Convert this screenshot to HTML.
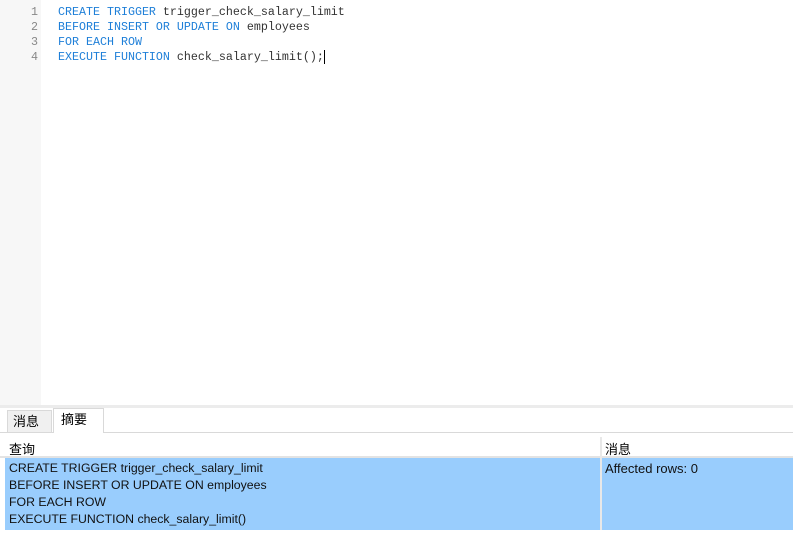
<!DOCTYPE html>
<html><head><meta charset="utf-8"><style>
body{margin:0;width:793px;height:545px;overflow:hidden;background:#fff;position:relative;font-family:"Liberation Sans","Noto Sans CJK SC",sans-serif}
.gut{position:absolute;left:0;top:0;width:41px;height:405px;background:#f7f7f7}
.code{position:absolute;left:0;top:5px;font-family:"Liberation Mono",monospace;font-size:11.67px;line-height:15px}
.ln{position:absolute;left:0;width:38px;text-align:right;color:#888}
.tx{position:absolute;left:58px;white-space:pre;color:#333}
.k{color:#1e7fd8}
.band{position:absolute;left:0;top:405px;width:793px;height:3px;background:#ececec}
.tabs{position:absolute;left:0;top:408px;width:793px;height:24px;border-bottom:1px solid #d9d9d9}
.t1{position:absolute;left:7px;top:2px;width:45px;height:22px;background:#f0f0f0;border:1px solid #d9d9d9;border-bottom:none;font-size:13px;line-height:22px;padding-left:5px;box-sizing:border-box}
.t2{position:absolute;left:53px;top:0;width:51px;height:25px;background:#fff;border:1px solid #d9d9d9;border-bottom:none;font-size:13px;line-height:22px;padding-left:7px;box-sizing:border-box}
.hd{position:absolute;top:439px;font-size:13px;color:#000}
.hl{position:absolute;left:0;top:456px;width:793px;height:2px;background:#e3e3e3}
.rows{position:absolute;left:5px;top:458px;width:788px;height:72px;background:#99cdfd}
.div{position:absolute;left:600px;top:437px;width:2px;height:93px;background:#e8e8e8}
.r{position:absolute;left:9px;font-size:12.3px;color:#111;white-space:pre}
</style></head><body>
<div class="gut"></div>
<div class="code">
<div class="ln" style="top:0">1</div><div class="tx" style="top:0"><span class="k">CREATE TRIGGER</span> trigger_check_salary_limit</div>
<div class="ln" style="top:15px">2</div><div class="tx" style="top:15px"><span class="k">BEFORE INSERT OR UPDATE ON</span> employees</div>
<div class="ln" style="top:30px">3</div><div class="tx" style="top:30px"><span class="k">FOR EACH ROW</span></div>
<div class="ln" style="top:45px">4</div><div class="tx" style="top:45px"><span class="k">EXECUTE FUNCTION</span> check_salary_limit();<span style="border-left:1px solid #000"></span></div>
</div>
<div class="band"></div>
<div class="tabs"><div class="t1">消息</div><div class="t2">摘要</div></div>
<div class="hd" style="left:9px">查询</div>
<div class="hd" style="left:605px">消息</div>
<div class="hl"></div>
<div class="rows"></div>
<div class="div"></div>
<div class="r" style="top:461px">CREATE TRIGGER trigger_check_salary_limit</div>
<div class="r" style="top:478px">BEFORE INSERT OR UPDATE ON employees</div>
<div class="r" style="top:495px">FOR EACH ROW</div>
<div class="r" style="top:512px">EXECUTE FUNCTION check_salary_limit()</div>
<div class="r" style="top:461px;left:605px;font-size:13px">Affected rows: 0</div>
</body></html>
